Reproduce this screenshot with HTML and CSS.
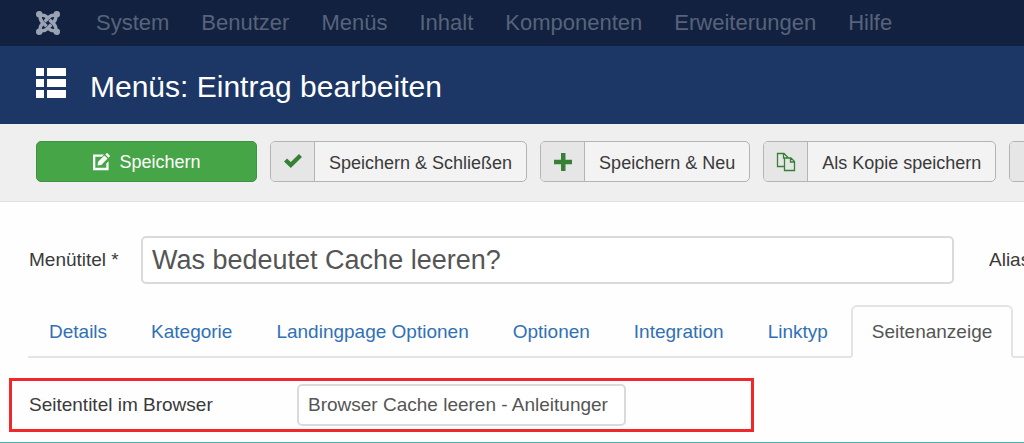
FILE: index.html
```html
<!DOCTYPE html>
<html lang="de">
<head>
    <meta charset="UTF-8">
    <meta name="viewport" content="width=device-width, initial-scale=1.0">
    <title>Menüs: Eintrag bearbeiten</title>
    <link rel="stylesheet" href="styles.css">
</head>
<body>
    <nav class="navbar">
        <a class="logo" href="#" aria-label="Joomla">
            <svg viewBox="0 0 24 24" width="24" height="24" fill="none" stroke="currentColor" stroke-width="3.4">
                <g fill="currentColor" stroke="none">
                    <circle cx="3.200" cy="3.200" r="3.200"/>
                    <circle cx="20.800" cy="3.200" r="3.200"/>
                    <circle cx="3.200" cy="20.800" r="3.200"/>
                    <circle cx="20.800" cy="20.800" r="3.200"/>
                </g>
                <path d="M4.500 4 Q3.400 8.200 6 10.800 L10.500 15.300"/>
                <path d="M20 4.500 Q15.800 3.400 13.200 6 L8.700 10.500"/>
                <path d="M19.500 20 Q20.600 15.800 18 13.200 L13.500 8.700"/>
                <path d="M4 19.500 Q8.200 20.600 10.800 18 L15.300 13.500"/>
                <path d="M4 4.500 Q8.200 3.400 10.800 6 L12 7.200"/>
                <path d="M19.500 4 Q20.600 8.200 18 10.800 L16.800 12"/>
                <path d="M20 19.500 Q15.800 20.600 13.200 18 L12 16.800"/>
                <path d="M4.500 20 Q3.400 15.800 6 13.200 L7.200 12"/>
            </svg>
        </a>
        <a href="#">System</a>
        <a href="#">Benutzer</a>
        <a href="#">Menüs</a>
        <a href="#">Inhalt</a>
        <a href="#">Komponenten</a>
        <a href="#">Erweiterungen</a>
        <a href="#">Hilfe</a>
    </nav>

    <header class="header">
        <svg viewBox="0 0 30 30" width="30" height="30" fill="currentColor">
            <path d="M0 0h8v8H0zM11 0h19v8H11zM0 11h8v8H0zM11 11h19v8H11zM0 22h8v8H0zM11 22h19v8H11z"/>
        </svg>
        <h1>Menüs: Eintrag bearbeiten</h1>
    </header>

    <div class="toolbar">
        <button type="button" class="btn btn-save">
            <svg viewBox="0 0 18 18" width="18" height="18" fill="currentColor">
                <path d="M1 1.500h11l-2 2.300H3.300v11h11V10.500l2.300-2.300v9H1z"/>
                <path d="M5.500 12.500l.6-3.800 6.300-6.300 3.200 3.200-6.300 6.300zM13.300 1.500l1.200-1.200q.5-.4 1 0l2.200 2.200q.4.500 0 1l-1.200 1.200z"/>
            </svg>
            Speichern
        </button>
        <button type="button" class="btn">
            <span class="btn-icon">
                <svg viewBox="0 0 18 18" width="18" height="18" fill="currentColor">
                    <path d="M0 8.500l3-3 3.800 3.600L15 1l3 3L6.800 15z"/>
                </svg>
            </span>
            <span class="btn-text">Speichern &amp; Schließen</span>
        </button>
        <button type="button" class="btn">
            <span class="btn-icon">
                <svg viewBox="0 0 18 18" width="18" height="18" fill="currentColor">
                    <path d="M7 0h4.500v6.700H18v4.500h-6.500V18H7v-6.800H0V6.700h7z"/>
                </svg>
            </span>
            <span class="btn-text">Speichern &amp; Neu</span>
        </button>
        <button type="button" class="btn">
            <span class="btn-icon">
                <svg viewBox="0 0 20 20" width="20" height="20" fill="none" stroke="currentColor" stroke-width="1.300">
                    <path d="M8.500 14.500H1.500V1.500H8L12 5.500V6M7.500 1.500V6H12M8.500 6H15L18.500 9.500V18.500H8.500zM14.500 6V10H18.500"/>
                </svg>
            </span>
            <span class="btn-text">Als Kopie speichern</span>
        </button>
        <button type="button" class="btn" aria-label="Schließen">
            <span class="btn-icon"></span>
        </button>
    </div>

    <main class="content">
        <div class="title-row">
            <label for="title">Menütitel *</label>
            <input type="text" id="title" value="Was bedeutet Cache leeren?">
            <div class="alias">
                <label for="alias">Alias</label>
                <input type="text" id="alias">
            </div>
        </div>

        <div class="tabs">
            <a href="#">Details</a>
            <a href="#">Kategorie</a>
            <a href="#">Landingpage Optionen</a>
            <a href="#">Optionen</a>
            <a href="#">Integration</a>
            <a href="#">Linktyp</a>
            <a href="#" class="active">Seitenanzeige</a>
        </div>

        <div class="highlight">
            <label for="page-title">Seitentitel im Browser</label>
            <input type="text" id="page-title" value="Browser Cache leeren - Anleitunger">
        </div>
    </main>
</body>
</html>
```
FILE: styles.css
```css
* {
    box-sizing: border-box;
}

body {
    display: flex;
    flex-direction: column;
    min-height: 100vh;
    margin: 0;
    overflow-x: hidden;
    border-bottom: 1px solid #4fb0b0;
    background-color: #fefefe;
    color: #3a3a3a;
    font-family: "Liberation Sans", Arial, sans-serif;
    font-size: 19px;
}

a {
    text-decoration: none;
}

/* Main menu */
.navbar {
    display: flex;
    align-items: center;
    gap: 32px;
    height: 46px;
    padding: 0 36px;
    background-color: #11213f;
    font-size: 22px;
}

.navbar a {
    color: #58637a;
}

.navbar .logo {
    display: flex;
    margin-right: 4px;
    color: #9aa3b3;
}

.header {
    display: flex;
    align-items: center;
    gap: 24px;
    height: 78px;
    padding: 4px 36px 0;
    background-color: #1c3766;
    color: #fff;
}

.header svg {
    margin-bottom: 8px;
}

h1 {
    margin: 0;
    font-size: 30px;
    font-weight: normal;
}

/* Buttons */
.toolbar {
    display: flex;
    gap: 13px;
    padding: 17px 0 19px 36px;
    overflow: hidden;
    border-bottom: 1px solid #e0e0e0;
    background-color: #efefef;
}

.btn {
    display: flex;
    flex-shrink: 0;
    height: 41px;
    padding: 0;
    overflow: hidden;
    border: 1px solid #b4b4b4;
    border-radius: 5px;
    background-color: #f3f3f3;
    color: #3a3a3a;
    font-family: inherit;
    font-size: 18px;
    line-height: 42px;
    white-space: nowrap;
    cursor: pointer;
}

.btn-save {
    align-items: center;
    justify-content: center;
    gap: 9px;
    width: 221px;
    border-color: #409240;
    background-color: #46a546;
    color: #fff;
}

.btn-icon {
    display: flex;
    align-items: center;
    justify-content: center;
    width: 44px;
    height: 100%;
    border-right: 1px solid #b4b4b4;
    background-color: #e6e6e6;
    color: #378137;
}

.btn-text {
    padding: 0 14px;
}

/* Form */
.content {
    padding-top: 34px;
}

input {
    border: 2px solid #dadada;
    border-radius: 5px;
    background-color: #fff;
    color: #555;
    font-family: inherit;
}

.title-row {
    display: grid;
    grid-template-columns: 112px 1fr 70px;
    align-items: center;
    padding-left: 29px;
}

#title {
    width: 100%;
    height: 48px;
    padding: 0 9px;
    font-size: 27px;
}

.alias {
    display: flex;
    gap: 40px;
    padding-left: 35px;
    overflow: hidden;
}

.tabs {
    display: flex;
    margin: 21px 0 0 28px;
    border-bottom: 2px solid #e4e4e4;
    white-space: nowrap;
}

.tabs a {
    margin-bottom: -2px;
    padding: 0 19px;
    border: 2px solid transparent;
    border-radius: 6px 6px 0 0;
    color: #3071b5;
    line-height: 49px;
}

.tabs a + a {
    margin-left: 2px;
}

.tabs .active {
    border-color: #e4e4e4;
    border-bottom-color: #fefefe;
    color: #555;
}

.highlight {
    display: flex;
    align-items: center;
    width: 745px;
    max-width: calc(100% - 18px);
    height: 54px;
    margin: 20px 0 10px 9px;
    padding-left: 17px;
    border: 3px solid #f0282c;
}

.highlight label {
    width: 268px;
}

.highlight input {
    width: 329px;
    height: 42px;
    padding: 0 9px;
    font-size: 19px;
}
```
